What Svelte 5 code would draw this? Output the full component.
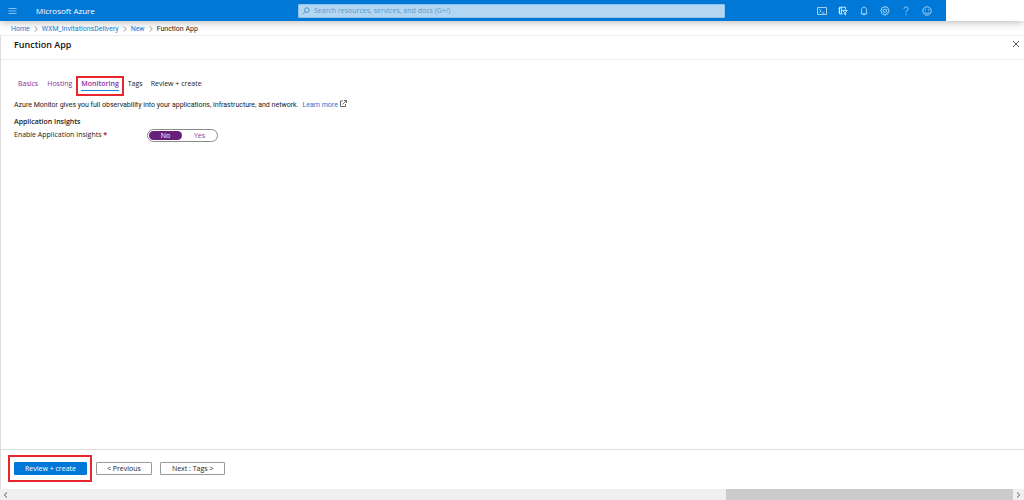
<script lang="ts">
	const crumbs = ['Home', 'WXM_InvitationsDelivery', 'New'];

	const tabs = [
		{ name: 'Basics', visited: true },
		{ name: 'Hosting', visited: true },
		{ name: 'Monitoring', visited: true },
		{ name: 'Tags', visited: false },
		{ name: 'Review + create', visited: false }
	];

	let activeTab = $state('Monitoring');
	let insights = $state('No');
	let search = $state('');
</script>

<div class="page">
	<header class="shell">
		<div class="topbar">
			<div class="brand">
				<button class="icon-btn" aria-label="Show portal menu">
					<svg width="9" height="8" viewBox="0 0 9 8"><path d="M0.5 1.5h8M0.5 4h8M0.5 6.5h8" /></svg>
				</button>
				<a class="brand-name" href="#home">Microsoft Azure</a>
			</div>

			<label class="search">
				<svg width="8" height="8" viewBox="0 0 8 8"><circle cx="4.8" cy="3.1" r="2.3" /><path d="M3.1 4.8L.5 7.4" /></svg>
				<input
					type="text"
					aria-label="Search"
					bind:value={search}
					placeholder="Search resources, services, and docs (G+/)"
				/>
			</label>

			<nav class="actions" aria-label="Portal actions">
				<button class="icon-btn" aria-label="Cloud Shell">
					<svg width="10" height="10" viewBox="0 0 10 10"><path d="M.5 1.5h9v7h-9zM2.3 3.2l1.9 1.7-1.9 1.8M5 7h2.5" /></svg>
				</button>
				<button class="icon-btn bright" aria-label="Directory and subscription">
					<svg width="10" height="10" viewBox="0 0 10 10"><path d="M4.5 8H1.5V1.2h6v2.3M3.4 1v7M.3 3h2M.3 5.8h2" /><path d="M4.5 4.4h4.8L7.6 6.3v2.6l-1.2-.7V6.3z" /></svg>
				</button>
				<button class="icon-btn" aria-label="Notifications">
					<svg width="10" height="10" viewBox="0 0 10 10"><path d="M2 7.8V7l.6-.8V3.7C2.6 2 3.5 1.2 5 1.2s2.4.8 2.4 2.5v2.5L8 7v.8zM4 8c0 1.4 2 1.4 2 0" /></svg>
				</button>
				<button class="icon-btn" aria-label="Settings">
					<svg width="10" height="10" viewBox="0 0 10 10"><path d="M4.2.6h1.6l.3 1.1 1.1-.6 1.1 1.1-.6 1.1 1.2.4v2.1l-1.2.3.6 1.2-1.1 1.1-1.1-.6-.3 1.2H4.2l-.4-1.2-1.1.6-1.1-1.1.6-1.2L1 5.8V3.7l1.2-.4-.6-1.1 1.1-1.1 1.1.6z" /><circle cx="5" cy="4.8" r="1.6" /></svg>
				</button>
				<button class="icon-btn" aria-label="Help">
					<svg width="10" height="10" viewBox="0 0 10 10"><path d="M3 2.8C3 1.5 3.9.8 5 .8s2.1.8 2.1 1.9C7.1 4.4 5 4.4 5 6.6M5 8v1.2" /></svg>
				</button>
				<button class="icon-btn" aria-label="Feedback">
					<svg width="10" height="10" viewBox="0 0 10 10"><circle cx="5" cy="5" r="4.2" /><path d="M3.3 3v1.4M6.7 3v1.4M2.6 5.9c.8 2 4 2 4.8 0" /></svg>
				</button>
			</nav>
		</div>
	</header>

	<nav class="crumbs" aria-label="Breadcrumb">
		{#each crumbs as crumb}
			<a href="#{crumb}">{crumb}</a>
			<svg width="4" height="6" viewBox="0 0 4 6"><path d="M.5 .3L3.3 3 .5 5.7" /></svg>
		{/each}
		<span>Function App</span>
	</nav>

	<main class="blade">
		<div class="blade-title">
			<h1>Function App</h1>
			<button class="icon-btn close" aria-label="Close">
				<svg width="8" height="8" viewBox="0 0 8 8"><path d="M1 1l6 6M7 1L1 7" /></svg>
			</button>
		</div>

		<div class="content">
			<div class="tabs" role="tablist">
				{#each tabs as tab}
					<button
						class="tab"
						class:visited={tab.visited}
						class:active={tab.name === activeTab}
						role="tab"
						aria-selected={tab.name === activeTab}
						onclick={() => (activeTab = tab.name)}
					>
						<span>{tab.name}</span>
					</button>
				{/each}
			</div>

			<p>
				Azure Monitor gives you full observability into your applications, infrastructure, and network.
				<a class="learn" href="#learn">Learn more<svg width="7" height="7" viewBox="0 0 7 7"><path d="M3 1H.5v5.5h5V4M2.5 4.5l4-4M4 .5h2.5V3" /></svg></a>
			</p>

			<h2>Application Insights</h2>
			<div class="field">
				<span id="insights-label">Enable Application Insights <b>*</b></span>
				<div class="toggle" role="radiogroup" aria-labelledby="insights-label">
					{#each ['No', 'Yes'] as option}
						<label class:checked={insights === option}>
							<input type="radio" name="insights" value={option} bind:group={insights} />
							{option}
						</label>
					{/each}
				</div>
			</div>
		</div>

		<footer>
			<div class="callout"><button class="btn primary">Review + create</button></div>
			<button class="btn">&lt; Previous</button>
			<button class="btn next">Next : Tags &gt;</button>
		</footer>
	</main>

	<div class="scrollbar">
		<button class="icon-btn" aria-label="Scroll left">
			<svg width="5" height="6" viewBox="0 0 5 6"><path d="M4 .5L1.3 3 4 5.5" /></svg>
		</button>
		<div class="track"><div class="thumb"></div></div>
		<button class="icon-btn" aria-label="Scroll right">
			<svg width="5" height="6" viewBox="0 0 5 6"><path d="M1 .5L3.7 3 1 5.5" /></svg>
		</button>
	</div>
</div>

<style>
	:global(body) {
		margin: 0;
		background: #fff;
	}

	.page {
		display: flex;
		flex-direction: column;
		min-height: 100vh;
		font-family: 'Open Sans', 'Noto Sans', sans-serif;
		font-size: 7px;
		line-height: 10px;
		color: #222;
	}

	button,
	input {
		font: inherit;
		color: inherit;
	}

	a {
		color: #1679d3;
		text-decoration: none;
	}

	svg {
		display: block;
		flex: none;
		fill: none;
		stroke: currentColor;
		stroke-width: 0.8;
	}

	.icon-btn {
		display: flex;
		align-items: center;
		justify-content: center;
		padding: 0;
		border: none;
		background: none;
		cursor: pointer;
	}

	.shell {
		padding-right: 78px;
		background: #fff;
		box-shadow: 0 1px 8px rgba(0, 0, 0, 0.3);
	}

	.topbar {
		display: grid;
		grid-template-columns: 298fr 427fr 221fr;
		align-items: center;
		height: 21px;
		color: #fff;
		background: #0078d7;
	}

	.brand {
		display: flex;
		align-items: center;
		gap: 19px;
		padding-left: 8px;
	}

	.brand svg {
		stroke: #a9d0f2;
	}

	.brand-name {
		color: #fff;
		font-size: 8px;
		font-weight: 500;
	}

	.search {
		display: flex;
		align-items: center;
		gap: 4px;
		height: 14px;
		box-sizing: border-box;
		padding-left: 3px;
		border: 1px solid #8fc2ee;
		border-radius: 1px;
		color: #3f86c6;
		background: #b3d7f3;
	}

	.search input {
		flex: 1;
		min-width: 0;
		padding: 0;
		border: none;
		outline: none;
		background: none;
	}

	.search input::placeholder {
		color: #5e97cc;
	}

	.actions {
		display: flex;
		justify-content: flex-end;
		gap: 11px;
		padding-right: 14px;
		color: #cce4f7;
	}

	.bright {
		color: #fff;
	}

	.crumbs {
		display: flex;
		align-items: center;
		gap: 4px;
		height: 13px;
		padding: 1px 0 0 11px;
	}

	.crumbs,
	p {
		font-family: Roboto, 'Open Sans', sans-serif;
	}

	.crumbs svg {
		color: #888;
	}

	.blade {
		display: flex;
		flex: 1;
		flex-direction: column;
		border-top: 1px solid #eee;
		border-left: 1px solid #ddd;
	}

	.blade-title {
		display: flex;
		align-items: center;
		justify-content: space-between;
		height: 23px;
		padding: 0 4px 0 13px;
		border-bottom: 1px solid #eee;
	}

	h1 {
		margin: 0 0 6px;
		font-size: 9px;
		font-weight: 600;
		line-height: 12px;
		color: #111;
	}

	.close {
		margin-bottom: 8px;
		color: #333;
	}

	.content {
		flex: 1;
		padding: 16px 13px;
	}

	.tabs {
		display: flex;
		align-items: flex-start;
	}

	.tab {
		padding: 3px 4px;
		border: none;
		background: none;
		cursor: pointer;
	}

	.tab:first-child {
		padding-right: 5px;
	}

	.tab span {
		display: block;
		padding-bottom: 1px;
		border-bottom: 1px solid transparent;
		line-height: 10px;
	}

	.visited {
		color: #8a2da5;
	}

	.active {
		padding: 1px 3px 3px;
		border: 2px solid #e8262d;
		font-weight: 600;
	}

	.active span {
		border-color: #1a86dc;
	}

	p {
		display: flex;
		gap: 4px;
		margin: 4px 0 7px;
	}

	.learn {
		display: flex;
		gap: 2px;
	}

	.learn svg {
		color: #444;
	}

	h2 {
		margin: 0;
		font-size: 7px;
		font-weight: 600;
		line-height: 10px;
	}

	.field {
		display: flex;
		align-items: flex-start;
		padding-top: 2px;
	}

	.field > span {
		width: 133px;
		padding-top: 1px;
	}

	.field b {
		color: #a4262c;
	}

	.toggle {
		display: flex;
		gap: 1px;
		padding: 1px;
		border: 1px solid #8a8a8a;
		border-radius: 7px;
	}

	.toggle label {
		display: flex;
		align-items: center;
		justify-content: center;
		width: 33px;
		height: 9px;
		border-radius: 5px;
		color: #7a3a96;
		cursor: pointer;
	}

	.toggle .checked {
		color: #fff;
		background: #68217a;
	}

	.toggle input {
		appearance: none;
		width: 0;
		height: 0;
		margin: 0;
	}

	footer {
		display: flex;
		align-items: flex-start;
		gap: 4px;
		height: 34px;
		padding: 5px 0 0 7px;
		border-top: 1px solid #ddd;
	}

	.callout {
		padding: 5px 3px 5px 4px;
		border: 2px solid #e8262d;
	}

	.btn {
		display: block;
		height: 13px;
		padding: 0 10px;
		border: 1px solid #999;
		border-radius: 1px;
		background: #fff;
		line-height: 11px;
		cursor: pointer;
	}

	footer > .btn {
		margin-top: 7px;
	}

	.primary {
		border-color: #0078d7;
		color: #fff;
		background: #0078d7;
	}

	footer > .next {
		margin-left: 4px;
		padding: 0 11px;
	}

	.scrollbar {
		display: flex;
		height: 11px;
		background: #f0f0f0;
		color: #333;
	}

	.scrollbar .icon-btn {
		width: 11px;
	}

	.track {
		display: flex;
		flex: 1;
		justify-content: flex-end;
	}

	.thumb {
		width: 28.6%;
		background: #cbcbcb;
	}
</style>
